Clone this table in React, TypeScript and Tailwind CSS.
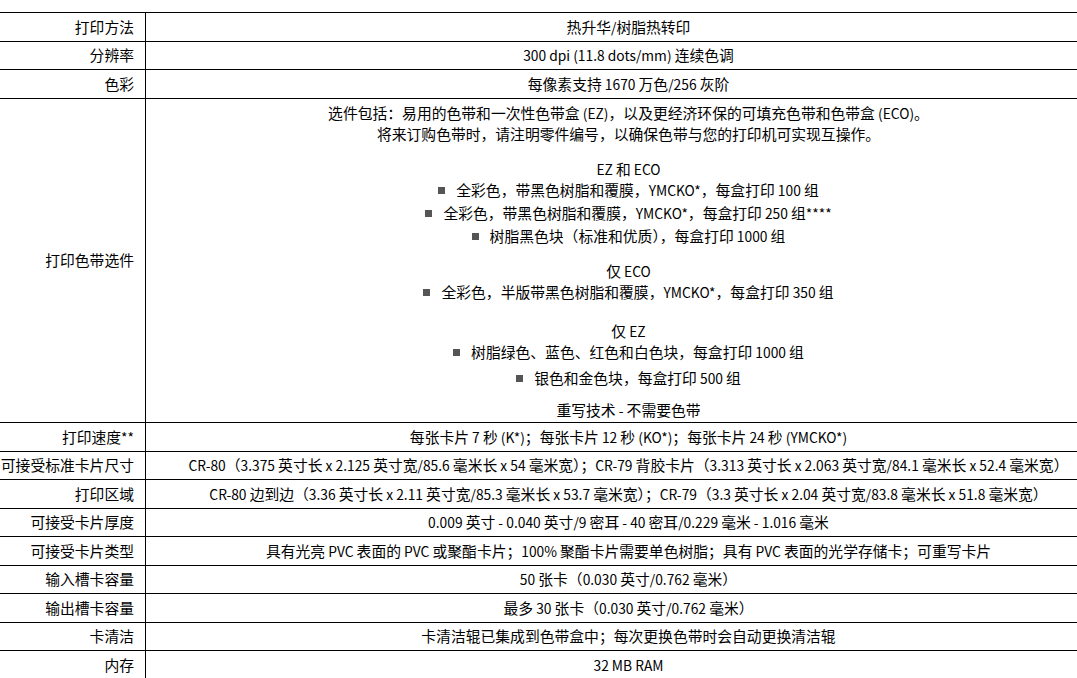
const rows: { label: string; value: string; h: string }[] = [
  { label: "打印速度**", value: "每张卡片 7 秒 (K*)；每张卡片 12 秒 (KO*)；每张卡片 24 秒 (YMCKO*)", h: "h-[29px]" },
  {
    label: "可接受标准卡片尺寸",
    value:
      "CR-80（3.375 英寸长 x 2.125 英寸宽/85.6 毫米长 x 54 毫米宽）；CR-79 背胶卡片（3.313 英寸长 x 2.063 英寸宽/84.1 毫米长 x 52.4 毫米宽）",
    h: "h-[28px]",
  },
  {
    label: "打印区域",
    value:
      "CR-80 边到边（3.36 英寸长 x 2.11 英寸宽/85.3 毫米长 x 53.7 毫米宽）；CR-79（3.3 英寸长 x 2.04 英寸宽/83.8 毫米长 x 51.8 毫米宽）",
    h: "h-[29px]",
  },
  { label: "可接受卡片厚度", value: "0.009 英寸 - 0.040 英寸/9 密耳 - 40 密耳/0.229 毫米 - 1.016 毫米", h: "h-[28px]" },
  {
    label: "可接受卡片类型",
    value: "具有光亮 PVC 表面的 PVC 或聚酯卡片；100% 聚酯卡片需要单色树脂；具有 PVC 表面的光学存储卡；可重写卡片",
    h: "h-[29px]",
  },
  { label: "输入槽卡容量", value: "50 张卡（0.030 英寸/0.762 毫米）", h: "h-[28px]" },
  { label: "输出槽卡容量", value: "最多 30 张卡（0.030 英寸/0.762 毫米）", h: "h-[29px]" },
  { label: "卡清洁", value: "卡清洁辊已集成到色带盒中；每次更换色带时会自动更换清洁辊", h: "h-[28px]" },
  { label: "内存", value: "32 MB RAM", h: "h-[29px]" },
]

// Chinese runs are set a touch larger than the Latin runs, as in the source document
function T({ s }: { s: string }) {
  const parts = s.split(/([\u2e80-\u9fff\u3000-\u303f\uff00-\uffef]+)/)
  return (
    <>
      {parts.map((p, i) =>
        i % 2 === 1 ? (
          <span key={i} className="text-[14.8px] leading-none">
            {p}
          </span>
        ) : (
          <span key={i}>{p}</span>
        ),
      )}
    </>
  )
}

function Row({ label, value, h }: { label: string; value: string; h: string }) {
  return (
    <div className={`flex border-t border-black ${h}`}>
      <div className="w-[146px] shrink-0 border-r border-black flex items-center justify-end pr-[11px] whitespace-nowrap">
        <span>
          <T s={label} />
        </span>
      </div>
      <div className="flex-1 flex items-center justify-center whitespace-nowrap">
        <span>
          <T s={value} />
        </span>
      </div>
    </div>
  )
}

function Bullet({ text, className = "" }: { text: string; className?: string }) {
  return (
    <div className={`flex items-center justify-center h-[21px] ${className}`}>
      <span className="w-[7px] h-[7px] bg-[#555555] mr-[11px] shrink-0" />
      <span>
        <T s={text} />
      </span>
    </div>
  )
}

export default function App() {
  return (
    <div
      lang="zh-CN"
      className="w-full min-h-screen bg-white overflow-hidden text-black text-[13.8px] leading-[21px]"
      style={{ fontFamily: '"Noto Sans CJK SC", "Noto Sans", sans-serif' }}
    >
      <div className="w-[1111px] pt-[12px]">
        <Row label="打印方法" value="热升华/树脂热转印" h="h-[29px]" />
        <Row label="分辨率" value="300 dpi (11.8 dots/mm) 连续色调" h="h-[28px]" />
        <Row label="色彩" value="每像素支持 1670 万色/256 灰阶" h="h-[29px]" />

        <div className="flex border-t border-black h-[324px]">
          <div className="w-[146px] shrink-0 border-r border-black flex items-center justify-end pr-[11px]">
            <span>
              <T s="打印色带选件" />
            </span>
          </div>
          <div className="flex-1 text-center pt-[4px] whitespace-nowrap">
            <p className="h-[21px]">
              <T s="选件包括：易用的色带和一次性色带盒 (EZ)，以及更经济环保的可填充色带和色带盒 (ECO)。" />
            </p>
            <p className="h-[21px]">
              <T s="将来订购色带时，请注明零件编号，以确保色带与您的打印机可实现互操作。" />
            </p>

            <p className="h-[21px] mt-[14px]">
              <T s="EZ 和 ECO" />
            </p>
            <Bullet text="全彩色，带黑色树脂和覆膜，YMCKO*，每盒打印 100 组" />
            <Bullet className="mt-[2px]" text="全彩色，带黑色树脂和覆膜，YMCKO*，每盒打印 250 组****" />
            <Bullet className="mt-[2px]" text="树脂黑色块（标准和优质），每盒打印 1000 组" />

            <p className="h-[21px] mt-[14px]">
              <T s="仅 ECO" />
            </p>
            <Bullet text="全彩色，半版带黑色树脂和覆膜，YMCKO*，每盒打印 350 组" />

            <p className="h-[21px] mt-[18px]">
              <T s="仅 EZ" />
            </p>
            <Bullet text="树脂绿色、蓝色、红色和白色块，每盒打印 1000 组" />
            <Bullet className="mt-[5px]" text="银色和金色块，每盒打印 500 组" />

            <p className="h-[21px] mt-[11px]">
              <T s="重写技术 - 不需要色带" />
            </p>
          </div>
        </div>

        {rows.map((r) => (
          <Row key={r.label} {...r} />
        ))}
      </div>
    </div>
  )
}
